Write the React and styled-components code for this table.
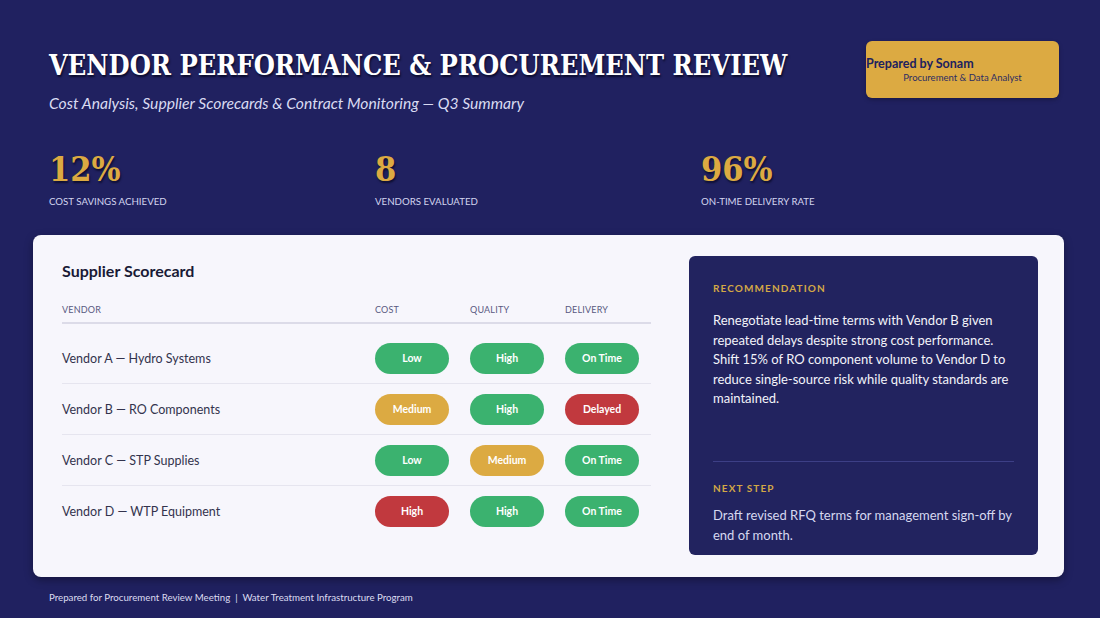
import React from 'react';
import styled, { createGlobalStyle } from 'styled-components';

const GlobalStyle = createGlobalStyle`
  html, body {
    margin: 0;
    padding: 0;
    background: #202160;
  }
  body {
    font-family: Lato, 'Noto Sans', sans-serif;
  }
`;

const Page = styled.div`
  width: 1100px;
  height: 618px;
  box-sizing: border-box;
  padding: 41px 36px 0 33px;
  background: #202160;
  display: flex;
  flex-direction: column;
  overflow: hidden;
`;

const Header = styled.header`
  display: flex;
  justify-content: space-between;
  align-items: flex-start;
  padding-left: 16px;
  padding-right: 5px;
`;

const TitleBlock = styled.div`
  padding-top: 8px;
`;

const Title = styled.h1`
  margin: 0;
  font-family: 'DejaVu Serif Condensed', 'DejaVu Serif', serif;
  font-weight: 700;
  font-size: 27px;
  line-height: 34px;
  white-space: nowrap;
  color: #ffffff;
  text-shadow: 1px 2px 2px rgba(0, 0, 20, 0.7);
`;

const Subtitle = styled.p`
  margin: 11px 0 0;
  font-family: Lato, sans-serif;
  font-style: italic;
  font-size: 15.7px;
  line-height: 19px;
  color: #d9dbf2;
`;

const PreparedBox = styled.div`
  width: 193px;
  height: 57px;
  box-sizing: border-box;
  background: #dcaa42;
  border-radius: 6px;
  display: flex;
  flex-direction: column;
  justify-content: center;
  color: #20215f;
  box-shadow: 0 2px 4px rgba(0, 0, 0, 0.25);
`;

const PreparedName = styled.div`
  font-size: 12.5px;
  font-weight: 700;
  line-height: 15px;
`;

const PreparedRole = styled.div`
  font-size: 9.5px;
  line-height: 13px;
  text-align: center;
  color: #2d2d63;
`;

const Stats = styled.div`
  display: grid;
  grid-template-columns: repeat(3, 326px);
  padding-left: 16px;
  margin-top: 36px;
`;

const Stat = styled.div`
  display: flex;
  flex-direction: column;
`;

const StatValue = styled.div`
  font-family: 'DejaVu Serif Condensed', 'DejaVu Serif', serif;
  font-weight: 700;
  font-size: 34px;
  line-height: 40px;
  color: #dcaa42;
  text-shadow: 1px 2px 2px rgba(0, 0, 20, 0.6);
`;

const StatLabel = styled.div`
  margin-top: 6px;
  font-size: 9.7px;
  line-height: 12px;
  color: #d3d5ef;
  text-transform: uppercase;
`;

const Card = styled.section`
  margin-top: 28px;
  height: 342px;
  flex-shrink: 0;
  box-sizing: border-box;
  background: #f7f6fc;
  border-radius: 8px;
  padding: 21px 26px 22px 29px;
  display: grid;
  grid-template-columns: 589px 1fr;
  column-gap: 38px;
  box-shadow: 0 3px 8px rgba(0, 0, 0, 0.35);
`;

const Scorecard = styled.div`
  padding-top: 5px;
`;

const CardTitle = styled.h2`
  margin: 0;
  font-size: 16px;
  font-weight: 700;
  color: #1a1a36;
  line-height: 20px;
`;

const Row = styled.div`
  display: grid;
  grid-template-columns: 313px 95px 95px 1fr;
  align-items: center;
  height: ${({ head }) => (head ? '26px' : '50px')};
  border-bottom: ${({ head, last }) =>
    head ? '2px solid #dcdbe8' : last ? 'none' : '1px solid #e6e5ef'};
  margin-top: ${({ head }) => (head ? '15px' : '0')};
  &:nth-child(3) {
    margin-top: 9px;
  }
`;

const HeadCell = styled.div`
  font-size: 9px;
  color: #595981;
  text-transform: uppercase;
  letter-spacing: 0.2px;
`;

const VendorName = styled.div`
  font-size: 12.5px;
  color: #33334d;
`;

const pillColors = {
  green: '#3bb26f',
  gold: '#dcaa42',
  red: '#c1393e',
};

const Pill = styled.div`
  width: 74px;
  height: 31px;
  border-radius: 16px;
  background: ${({ tone }) => pillColors[tone]};
  color: #ffffff;
  font-size: 10.5px;
  font-weight: 700;
  display: flex;
  align-items: center;
  justify-content: center;
`;

const Panel = styled.aside`
  background: #22235f;
  border-radius: 6px;
  padding: 26px 24px 0;
  display: flex;
  flex-direction: column;
`;

const PanelLabel = styled.div`
  font-size: 10px;
  font-weight: 700;
  letter-spacing: 1.1px;
  color: #d4a846;
  text-transform: uppercase;
`;

const PanelText = styled.p`
  margin: ${({ small }) => (small ? '12px 0 0' : '17px 0 0')};
  font-size: 13px;
  line-height: 19.6px;
  color: ${({ small }) => (small ? '#d6d8f0' : '#f3f3fa')};
`;

const Divider = styled.hr`
  border: 0;
  border-top: 1px solid #3d3f86;
  width: 100%;
  margin: 52px 0 20px;
`;

const Footer = styled.footer`
  margin-top: 14px;
  padding-left: 16px;
  font-size: 9.7px;
  color: #dcdcf0;
`;

const vendors = [
  { name: 'Vendor A — Hydro Systems', cost: ['Low', 'green'], quality: ['High', 'green'], delivery: ['On Time', 'green'] },
  { name: 'Vendor B — RO Components', cost: ['Medium', 'gold'], quality: ['High', 'green'], delivery: ['Delayed', 'red'] },
  { name: 'Vendor C — STP Supplies', cost: ['Low', 'green'], quality: ['Medium', 'gold'], delivery: ['On Time', 'green'] },
  { name: 'Vendor D — WTP Equipment', cost: ['High', 'red'], quality: ['High', 'green'], delivery: ['On Time', 'green'] },
];

const stats = [
  { value: '12%', label: 'Cost Savings Achieved' },
  { value: '8', label: 'Vendors Evaluated' },
  { value: '96%', label: 'On-Time Delivery Rate' },
];

export default function App() {
  return (
    <>
      <GlobalStyle />
      <Page>
        <Header>
          <TitleBlock>
            <Title>VENDOR PERFORMANCE &amp; PROCUREMENT REVIEW</Title>
            <Subtitle>Cost Analysis, Supplier Scorecards &amp; Contract Monitoring — Q3 Summary</Subtitle>
          </TitleBlock>
          <PreparedBox>
            <PreparedName>Prepared by Sonam</PreparedName>
            <PreparedRole>Procurement &amp; Data Analyst</PreparedRole>
          </PreparedBox>
        </Header>

        <Stats>
          {stats.map((s) => (
            <Stat key={s.label}>
              <StatValue>{s.value}</StatValue>
              <StatLabel>{s.label}</StatLabel>
            </Stat>
          ))}
        </Stats>

        <Card>
          <Scorecard>
            <CardTitle>Supplier Scorecard</CardTitle>
            <Row head>
              <HeadCell>Vendor</HeadCell>
              <HeadCell>Cost</HeadCell>
              <HeadCell>Quality</HeadCell>
              <HeadCell>Delivery</HeadCell>
            </Row>
            {vendors.map((v, i) => (
              <Row key={v.name} last={i === vendors.length - 1}>
                <VendorName>{v.name}</VendorName>
                <Pill tone={v.cost[1]}>{v.cost[0]}</Pill>
                <Pill tone={v.quality[1]}>{v.quality[0]}</Pill>
                <Pill tone={v.delivery[1]}>{v.delivery[0]}</Pill>
              </Row>
            ))}
          </Scorecard>

          <Panel>
            <PanelLabel>Recommendation</PanelLabel>
            <PanelText>
              Renegotiate lead-time terms with Vendor B given repeated delays despite strong cost
              performance. Shift 15% of RO component volume to Vendor D to reduce single-source risk
              while quality standards are maintained.
            </PanelText>
            <Divider />
            <PanelLabel>Next Step</PanelLabel>
            <PanelText small>
              Draft revised RFQ terms for management sign-off by end of month.
            </PanelText>
          </Panel>
        </Card>

        <Footer>Prepared for Procurement Review Meeting &nbsp;|&nbsp; Water Treatment Infrastructure Program</Footer>
      </Page>
    </>
  );
}
